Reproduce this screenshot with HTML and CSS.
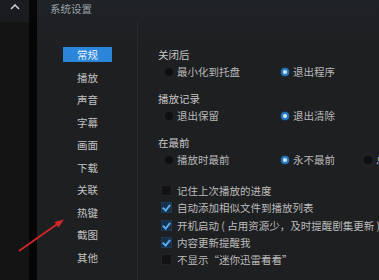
FILE: index.html
```html
<!DOCTYPE html>
<html>
<head>
	<meta charset="utf-8">
	<title>系统设置</title>
	<link rel="stylesheet" href="styles.css">
</head>
<body>
	<div class="side">
		<div class="side-head">
			<svg width="10" height="6" viewBox="0 0 10 6"><path d="M1 5 L5 1 L9 5" fill="none" stroke="#c9ccd0" stroke-width="1.6"/></svg>
		</div>
	</div>
	<div class="gap"></div>

	<div class="main">
		<div class="title">系统设置</div>
		<div class="panel">
			<div class="nav">
				<div class="nav-item active">常规</div>
				<div class="nav-item">播放</div>
				<div class="nav-item">声音</div>
				<div class="nav-item">字幕</div>
				<div class="nav-item">画面</div>
				<div class="nav-item">下载</div>
				<div class="nav-item">关联</div>
				<div class="nav-item">热键</div>
				<div class="nav-item">截图</div>
				<div class="nav-item">其他</div>
			</div>

			<div class="content">
				<div class="group">
					<div class="heading">关闭后</div>
					<div class="options">
						<span class="opt w1"><i class="radio"></i>最小化到托盘</span>
						<span class="opt"><i class="radio on"></i>退出程序</span>
					</div>
				</div>
				<div class="group">
					<div class="heading">播放记录</div>
					<div class="options">
						<span class="opt w1"><i class="radio"></i>退出保留</span>
						<span class="opt"><i class="radio on"></i>退出清除</span>
					</div>
				</div>
				<div class="group">
					<div class="heading">在最前</div>
					<div class="options">
						<span class="opt w1"><i class="radio"></i>播放时最前</span>
						<span class="opt w2"><i class="radio on"></i>永不最前</span>
						<span class="opt"><i class="radio"></i>总在最前</span>
					</div>
				</div>

				<div class="checks">
					<div class="check"><i class="box"></i>记住上次播放的进度</div>
					<div class="check"><i class="box on"></i>自动添加相似文件到播放列表</div>
					<div class="check"><i class="box on"></i>开机启动 ( 占用资源少，及时提醒剧集更新 )</div>
					<div class="check"><i class="box on"></i>内容更新提醒我</div>
					<div class="check"><i class="box"></i>不显示“迷你迅雷看看”</div>
				</div>
			</div>
		</div>
	</div>

	<svg class="arrow" width="70" height="40" viewBox="0 0 70 40">
		<line x1="19" y1="32" x2="58" y2="4.5" stroke="#d2262b" stroke-width="1.8"/>
		<path d="M64 0.5 L54.5 3 L58.5 8.5 Z" fill="#d2262b"/>
	</svg>
</body>
</html>
```

FILE: styles.css
```css
html, body {
	margin: 0;
	padding: 0;
}
body {
	display: flex;
	width: 379px;
	height: 280px;
	overflow: hidden;
	background: #1e1f21;
	font-family: "Noto Sans CJK SC", "Noto Sans", sans-serif;
	font-size: 10.5px;
	color: #c4c4c4;
	position: relative;
}
.side {
	width: 29px;
	flex-shrink: 0;
	background: #141414;
}
.side-head {
	height: 22px;
	background: #1a1c1f;
	display: flex;
	justify-content: center;
	padding-top: 4px;
	box-sizing: border-box;
	padding-left: 1px;
}
.gap {
	width: 8px;
	flex-shrink: 0;
	background: #060606;
}
.main {
	flex: 1;
	min-width: 0;
	overflow: hidden;
	background: linear-gradient(#1f2226, #1e1f21 60px);
	display: flex;
	flex-direction: column;
}
.title {
	height: 22px;
	line-height: 18px;
	padding-left: 13px;
	color: #9da2a8;
}
.panel {
	flex: 1;
	display: flex;
}
.nav {
	width: 101px;
	flex-shrink: 0;
	box-sizing: border-box;
	padding: 25px 25px 0 26px;
	border-right: 1px solid #2a2b2e;
	display: flex;
	flex-direction: column;
}
.nav-item {
	height: 22.5px;
	line-height: 22.5px;
	text-align: center;
	color: #c2c2c2;
}
.nav-item.active {
	height: 15px;
	line-height: 15px;
	margin-bottom: 4.5px;
	background: #2b86d9;
	color: #e6f1fb;
}
.content {
	flex: 1;
	min-width: 0;
	padding: 25px 0 0 20px;
	white-space: nowrap;
}
.group {
	height: 44px;
}
.heading {
	height: 18px;
	line-height: 15px;
	color: #c6c6c6;
}
.options {
	display: flex;
	padding-left: 7px;
	line-height: 14px;
}
.opt {
	display: flex;
	align-items: center;
	flex-shrink: 0;
	color: #b8b8b8;
}
.opt.w1 {
	width: 116px;
}
.opt.w2 {
	width: 83px;
}
.radio {
	width: 8px;
	height: 8px;
	border-radius: 50%;
	background: #0f0f10;
	margin-right: 4px;
	box-sizing: border-box;
}
.radio.on {
	background: #cfe9ff;
	border: 2px solid #2a78bf;
	box-shadow: 0 0 2px #1d5f9a;
}
.checks {
	padding-top: 3px;
	padding-left: 3px;
}
.check {
	height: 17.3px;
	display: flex;
	align-items: center;
	color: #bcbcbc;
}
.box {
	width: 9px;
	height: 9px;
	flex-shrink: 0;
	background: #121213;
	border: 1px solid #232325;
	margin-right: 5px;
	position: relative;
}
.box.on {
	background: #16304a;
	border-color: #1c3a58;
}
.box.on::after {
	content: "";
	position: absolute;
	left: 2px;
	top: 0px;
	width: 3px;
	height: 6px;
	border: solid #5aa8ec;
	border-width: 0 2px 2px 0;
	transform: rotate(40deg);
}
.arrow {
	position: absolute;
	left: 0;
	top: 219px;
}
```
